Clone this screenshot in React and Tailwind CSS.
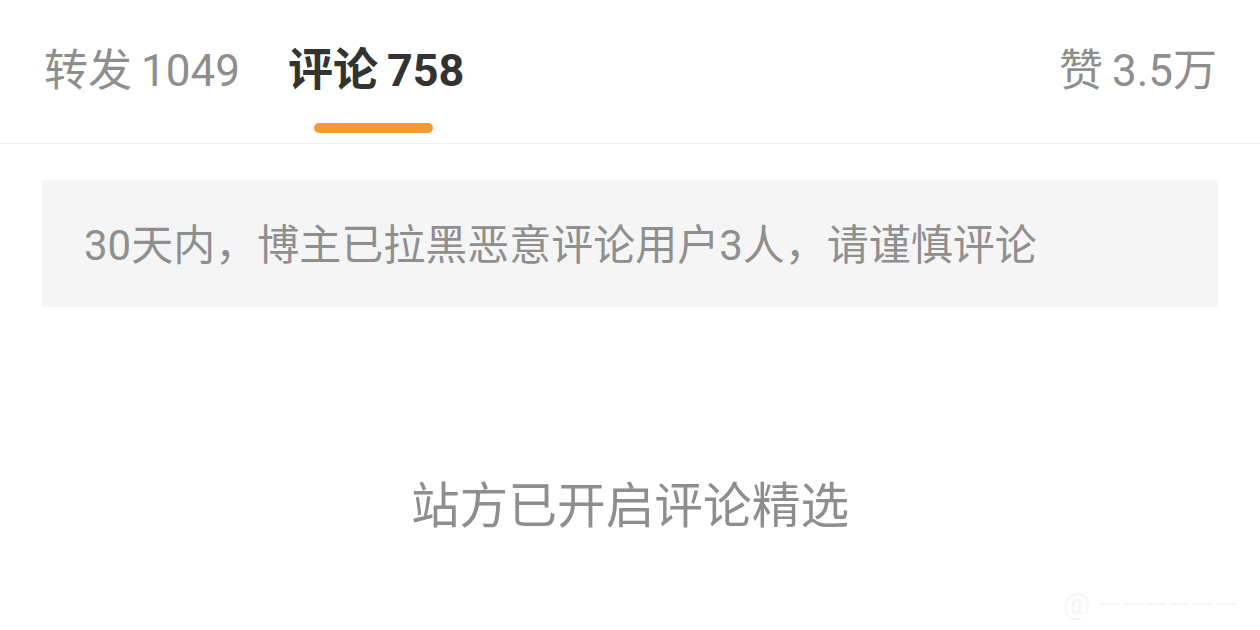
export default function App() {
  const font = { fontFamily: 'Roboto, "Noto Sans CJK SC", "Noto Sans", sans-serif' };
  return (
    <div className="w-[1260px] h-[630px] bg-white overflow-hidden relative" style={font}>
      <div className="h-[144px] border-b border-[#eeeeee] flex justify-between pl-[44px] pr-[43px]">
        <div className="flex gap-[48px]">
          <div className="flex flex-col items-center">
            <div className="pt-[47px] text-[44px] leading-[48px] text-[#8e8e8e] whitespace-nowrap">
              转发<span className="ml-[9px]">1049</span>
            </div>
          </div>
          <div className="flex flex-col items-center">
            <div className="pt-[47px] text-[45px] leading-[48px] font-bold text-[#333333] whitespace-nowrap">
              评论<span className="ml-[9px]">758</span>
            </div>
            <div className="mt-[28px] ml-[-5px] h-[10px] w-[119px] rounded-full bg-[#f39a33]"></div>
          </div>
        </div>
        <div className="pt-[47px] text-[44px] leading-[48px] text-[#8e8e8e] whitespace-nowrap">
          赞<span className="ml-[9px]">3.5万</span>
        </div>
      </div>
      <div className="mx-[42px] mt-[36px] h-[127px] bg-[#f5f5f5] flex items-center pl-[42px] pt-[5px]">
        <span className="text-[42px] leading-[48px] text-[#8f8f8f] whitespace-nowrap">30天内，博主已拉黑恶意评论用户3人，请谨慎评论</span>
      </div>
      <div className="pt-[172px] text-center text-[48.7px] leading-[56px] text-[#8e8e8e]">站方已开启评论精选</div>
      <div className="absolute right-[22px] bottom-[8px] text-[30px] leading-[36px] text-[#f6f6f6] select-none">@ ——————</div>
    </div>
  );
}
